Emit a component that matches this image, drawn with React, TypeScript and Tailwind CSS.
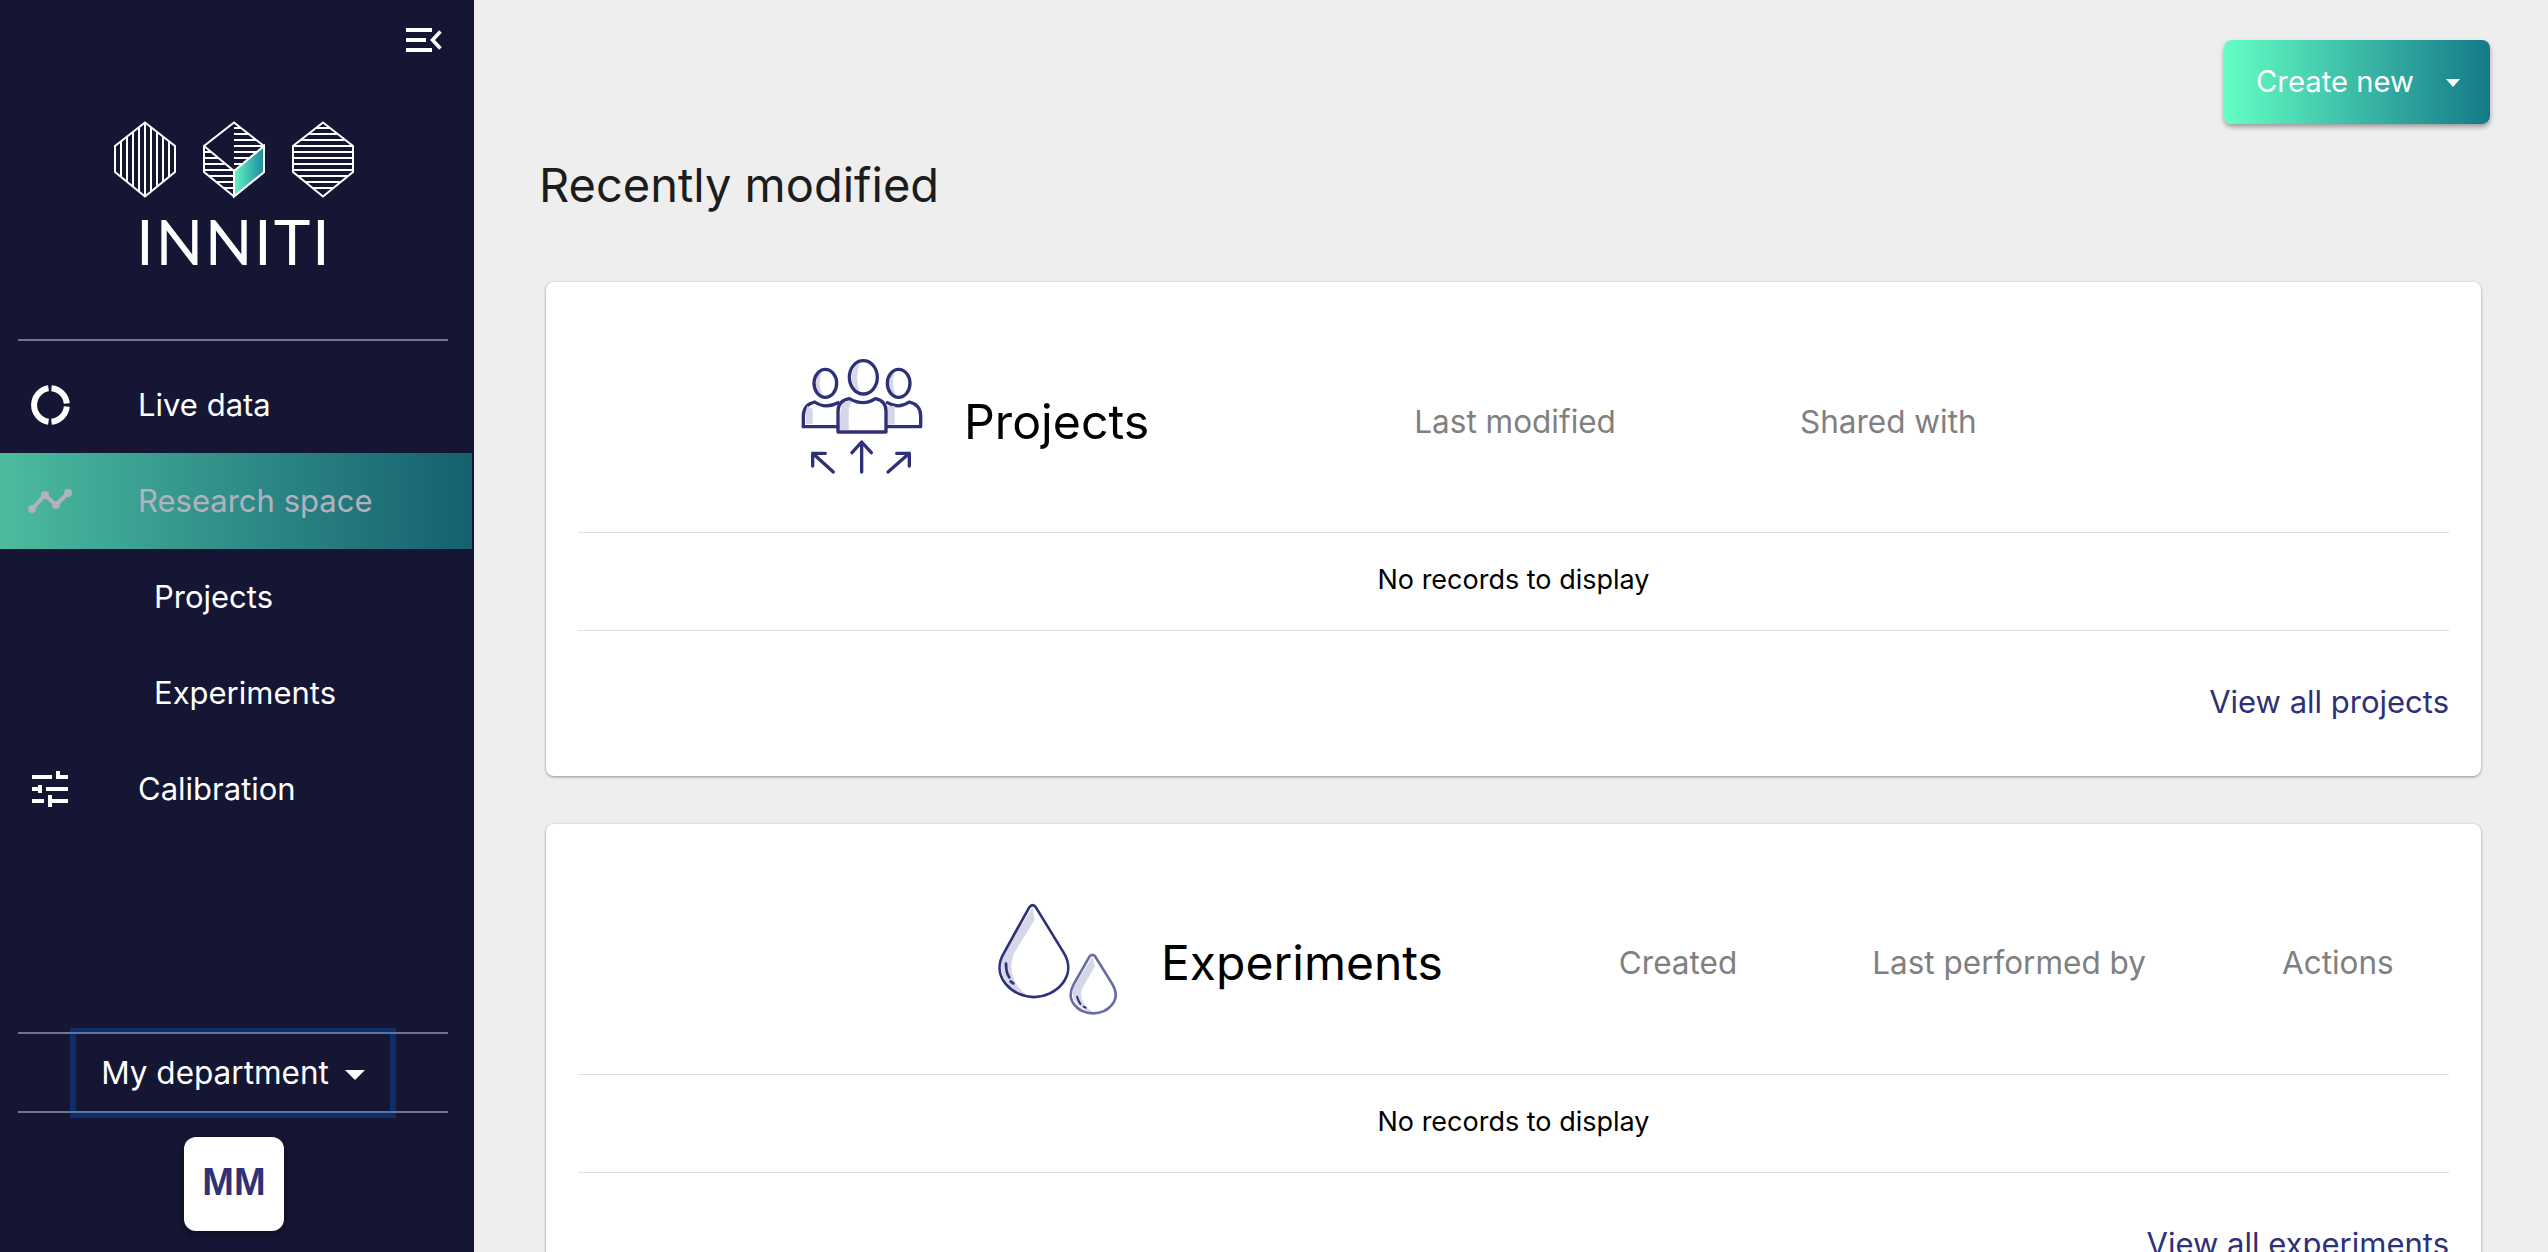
const navy = "#2e3177";
const shade = "#d5d6e8";

function hexLines(cx: number) {
  return [8, 14, 20, 26, 32, 38, 44, 50, 56, 62, 68].map((y) => (
    <line key={y} x1={cx - 31} x2={cx + 31} y1={y} y2={y} />
  ));
}

function Logo() {
  const hex = "0,-37 30,-13.5 30,12.5 0,37 -30,12.5 -30,-13.5";
  return (
    <svg width="240" height="80" viewBox="0 0 240 80" fill="none" stroke="white" strokeWidth="2">
      <defs>
        <linearGradient id="logoFace" x1="0" x2="1" y1="0" y2="0">
          <stop offset="0" stopColor="#64f5c4" />
          <stop offset="1" stopColor="#1b8a9c" />
        </linearGradient>
        <clipPath id="hexA">
          <polygon points={hex} transform="translate(31 39.5)" />
        </clipPath>
        <clipPath id="hexB">
          <polygon points="120,2.5 150,26 120,51 90,26 90,52 120,76.5" />
        </clipPath>
        <clipPath id="hexC">
          <polygon points={hex} transform="translate(209 39.5)" />
        </clipPath>
      </defs>
      <g clipPath="url(#hexA)">
        {[-24, -18, -12, -6, 0, 6, 12, 18, 24].map((x) => (
          <line key={x} x1={31 + x} x2={31 + x} y1="0" y2="80" />
        ))}
      </g>
      <polygon points={hex} transform="translate(31 39.5)" />
      <g clipPath="url(#hexB)">{hexLines(120)}</g>
      <polygon points={hex} transform="translate(120 39.5)" />
      <polygon points="120,51 150,26 150,52 120,76.5" fill="url(#logoFace)" />
      <path d="M90 26 L120 51 V76.5" />
      <g clipPath="url(#hexC)">{hexLines(209)}</g>
      <polygon points={hex} transform="translate(209 39.5)" />
    </svg>
  );
}

function MenuToggle() {
  return (
    <svg width="36" height="24" viewBox="0 0 36 24" fill="none" stroke="white" strokeWidth="4">
      <path d="M0 2 H26 M0 12 H20 M0 22 H26" />
      <path d="M34.5 3.5 L26.5 12 L34.5 20.5" strokeWidth="3.6" />
    </svg>
  );
}

function LiveIcon() {
  return (
    <svg width="40" height="40" viewBox="0 0 40 40" fill="none" stroke="white" strokeWidth="6">
      <path d="M18.5 3.2 A17 17 0 0 0 18.5 36.8" />
      <path d="M21.5 3.2 A17 17 0 0 1 36.8 18.5" />
      <path d="M36.8 21.5 A17 17 0 0 1 21.5 36.8" />
    </svg>
  );
}

function ResearchIcon() {
  return (
    <svg width="44" height="24" viewBox="0 0 44 24" fill="none" stroke="#b2b2bf" strokeWidth="4">
      <polyline points="4,20 17,6 28,16 40,4" />
      <g fill="#b2b2bf" stroke="none">
        <circle cx="4" cy="20" r="4" />
        <circle cx="17" cy="6" r="4" />
        <circle cx="28" cy="16" r="4" />
        <circle cx="40" cy="4" r="4" />
      </g>
    </svg>
  );
}

function TuneIcon() {
  return (
    <svg width="36" height="36" viewBox="0 0 36 36" fill="none" stroke="white" strokeWidth="4">
      <path d="M0 6 H20 M24 6 H36 M26 0 V8" />
      <path d="M0 18 H8 M14 18 H36 M8 14 V22" />
      <path d="M0 30 H12 M18 30 H36 M18 24 V36" />
    </svg>
  );
}

function ProjectsIcon() {
  return (
    <svg width="124" height="118" viewBox="90 52 372 354" fill="none" stroke={navy} strokeWidth="10" strokeLinecap="round" strokeLinejoin="round">
      <path d="M140 100 Q132 130 146 164 L160 168 Q140 130 156 92 Z" fill={shade} stroke="none" />
      <path d="M252 80 Q236 120 256 152 L270 156 Q252 110 270 68 Z" fill={shade} stroke="none" />
      <path d="M360 100 Q352 130 366 164 L380 168 Q360 130 376 92 Z" fill={shade} stroke="none" />
      <ellipse cx="166" cy="128" rx="34" ry="42" />
      <ellipse cx="280" cy="110" rx="42" ry="50" />
      <ellipse cx="386" cy="128" rx="34" ry="42" />
      <path d="M100 258 V226 Q100 192 134 184 Q166 206 204 186" />
      <path d="M112 196 Q104 220 108 250 H128 V205 Z" fill={shade} stroke="none" />
      <path d="M352 186 Q386 206 418 184 Q452 192 452 226 V258 H352" />
      <path d="M352 196 H374 V252 H352 Z" fill={shade} stroke="none" />
      <path d="M100 258 H204" />
      <path d="M216 186 Q208 220 208 268 H236 V214 Q236 190 250 178 Z" fill={shade} stroke="none" />
      <path d="M204 274 V212 Q204 180 238 174 Q280 198 316 174 Q348 180 348 212 V274 Z" />
      <path d="M275 394 V306 M246 336 L275 304 L304 336" />
      <path d="M190 394 L128 338 M128 376 V338 H166" />
      <path d="M354 394 L418 338 M380 338 H418 V376" />
    </svg>
  );
}

function DropsIcon() {
  return (
    <svg width="123" height="113" viewBox="80 60 370 340" fill="none" strokeLinecap="round" strokeLinejoin="round">
      <path d="M190 72 L100 220 C84 270 110 320 180 342 C130 310 116 260 134 212 L196 110 Z" fill={shade} />
      <path d="M180 73 Q190 60 200 73 L284 210 C326 280 260 343 194 343 C128 343 62 280 104 210 Z" stroke={navy} strokeWidth="8" />
      <path d="M110 242 Q110 270 120 284 M124 296 L132 302" stroke={navy} strokeWidth="8" />
      <path d="M370 222 L316 310 C300 350 330 380 376 392 C340 372 330 340 340 316 L378 250 Z" fill={shade} />
      <path d="M362 220 Q370 212 378 220 L430 304 C460 354 416 392 372 392 C328 392 286 354 314 304 Z" stroke="#6a6da3" strokeWidth="8" />
      <path d="M324 342 Q328 356 334 364 M344 372 L350 375" stroke={navy} strokeWidth="6" />
    </svg>
  );
}

function NavItem({ icon, label, sub, active }: { icon?: React.ReactNode; label: string; sub?: boolean; active?: boolean }) {
  return (
    <div
      className={`flex h-24 items-center text-[31px] ${active ? "w-[472px] bg-gradient-to-r from-[#4cbc9f] to-[#15606f] text-[#b2b2bf]" : "text-white"}`}
    >
      <div className="flex w-[100px] shrink-0 justify-center">{icon}</div>
      <span className={sub ? "ml-[54px]" : "ml-[38px]"}>{label}</span>
    </div>
  );
}

function CardFoot({ children }: { children: React.ReactNode }) {
  return (
    <>
      <div className="flex h-[99px] items-center justify-center border-y border-[#dedede] pb-[2px] text-[27px] text-black">
        No records to display
      </div>
      <div className="flex h-[145px] items-center justify-end pb-[2px] text-[31px] text-[#2e3177]">{children}</div>
    </>
  );
}

export default function App() {
  return (
    <div className="flex h-screen overflow-hidden bg-[#eeeeee] font-['Inter',sans-serif]">
      <aside className="flex w-[474px] shrink-0 flex-col bg-[#151534]">
        <div className="flex justify-end pt-7 pr-[32px]">
          <MenuToggle />
        </div>
        <div className="mt-[68px] flex w-[468px] flex-col items-center">
          <Logo />
          <div className="mt-[5px] font-['Lato',sans-serif] text-[62px] leading-[72px] font-normal tracking-[2px] text-white">
            INNITI
          </div>
        </div>
        <div className="mt-[62px] ml-[18px] h-0.5 w-[430px] bg-[#75758a]" />
        <nav className="mt-[16px]">
          <NavItem icon={<LiveIcon />} label="Live data" />
          <NavItem icon={<ResearchIcon />} label="Research space" active />
          <NavItem label="Projects" sub />
          <NavItem label="Experiments" sub />
          <NavItem icon={<TuneIcon />} label="Calibration" />
        </nav>
        <div className="mt-[195px] ml-[18px] flex h-[81px] w-[430px] justify-center border-y-2 border-[#75758a]">
          <button className="flex h-[78px] w-[314px] items-center justify-center gap-4 text-[31.5px] text-white shadow-[0_0_0_6px_rgba(0,123,255,0.25)]">
            My department
            <span className="mt-1 border-x-[10px] border-t-[10px] border-x-transparent border-t-white" />
          </button>
        </div>
        <div className="mt-[24px] flex w-[468px] justify-center">
          <div className="flex h-[94px] w-[100px] items-center justify-center rounded-[12px] bg-white pb-1 font-['Liberation_Sans',sans-serif] text-[38px] font-bold text-[#2e3177] shadow-[0_3px_6px_rgba(0,0,0,0.4)]">
            MM
          </div>
        </div>
      </aside>

      <main className="min-w-0 flex-1">
        <div className="flex justify-end pt-10 pr-[58px]">
          <button className="flex h-[84px] w-[266px] items-center rounded-[8px] bg-gradient-to-r from-[#64ffc4] to-[#147a88] pl-8 text-[29.25px] text-white shadow-[0_3px_5px_rgba(0,0,0,0.35)]">
            Create new
            <span className="mt-0.5 ml-8 border-x-[7px] border-t-[8px] border-x-transparent border-t-white" />
          </button>
        </div>
        <h1 className="mt-[29px] ml-[65px] text-[47px] leading-[64px] text-[#1c1c1c]">Recently modified</h1>
        <div className="mt-[65px] ml-[72px] flex w-[1935px] flex-col gap-[48px]">
          <section className="rounded-[8px] bg-white px-8 shadow-[0_1px_3px_rgba(0,0,0,0.4)]">
            <div className="flex h-[250px] items-center pt-[30px]">
              <div className="mt-[-10px] ml-[222px]">
                <ProjectsIcon />
              </div>
              <h2 className="ml-[40px] text-[48.25px] text-black">Projects</h2>
              <span className="ml-[265px] text-[31.5px] text-[#808080]">Last modified</span>
              <span className="ml-[184px] text-[31.5px] text-[#808080]">Shared with</span>
            </div>
            <CardFoot>View all projects</CardFoot>
          </section>
          <section className="rounded-[8px] bg-white px-8 shadow-[0_1px_3px_rgba(0,0,0,0.4)]">
            <div className="flex h-[250px] items-center pt-[28px]">
              <div className="mt-[-8px] ml-[418px]">
                <DropsIcon />
              </div>
              <h2 className="ml-[42px] text-[48px] text-black">Experiments</h2>
              <span className="ml-[176px] text-[31.5px] text-[#808080]">Created</span>
              <span className="ml-[135px] text-[31.5px] text-[#808080]">Last performed by</span>
              <span className="ml-[136px] text-[31.5px] text-[#808080]">Actions</span>
            </div>
            <CardFoot>View all experiments</CardFoot>
          </section>
        </div>
      </main>
    </div>
  );
}
